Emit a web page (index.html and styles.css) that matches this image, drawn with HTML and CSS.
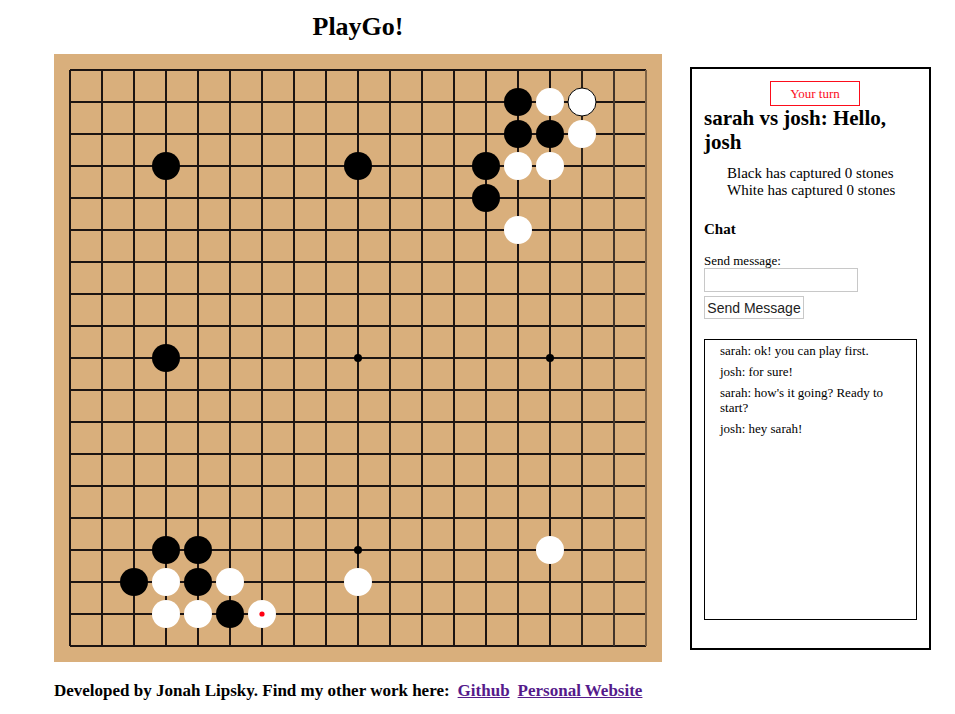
FILE: index.html
```html
<!DOCTYPE html>
<html lang="en">
<head>
<meta charset="utf-8">
<meta name="viewport" content="width=device-width, initial-scale=1">
<title>PlayGo!</title>
<link rel="stylesheet" href="styles.css">
</head>
<body>
<div class="page">
  <main class="game">
    <h1 class="title">PlayGo!</h1>
    <svg class="board" viewBox="0 0 608 608" role="img" aria-label="Go board">
      <rect class="wood" width="608" height="608"/>
      <path class="grid-line" d="M16 16H592M16 48H592M16 80H592M16 112H592M16 144H592M16 176H592M16 208H592M16 240H592M16 272H592M16 304H592M16 336H592M16 368H592M16 400H592M16 432H592M16 464H592M16 496H592M16 528H592M16 560H592M16 592H592"/>
      <path class="grid-line" d="M16 16V592M48 16V592M80 16V592M112 16V592M144 16V592M176 16V592M208 16V592M240 16V592M272 16V592M304 16V592M336 16V592M368 16V592M400 16V592M432 16V592M464 16V592M496 16V592"/>
      <path class="grid-line fade-1" d="M528 16V592"/>
      <path class="grid-line fade-2" d="M560 16V592"/>
      <path class="grid-line fade-3" d="M592 16V592"/>
      <g class="star">
        <circle cx="304" cy="304" r="4"/>
        <circle cx="496" cy="304" r="4"/>
        <circle cx="304" cy="496" r="4"/>
      </g>
      <g class="black">
        <circle cx="464" cy="48" r="14"/>
        <circle cx="464" cy="80" r="14"/>
        <circle cx="496" cy="80" r="14"/>
        <circle cx="112" cy="112" r="14"/>
        <circle cx="304" cy="112" r="14"/>
        <circle cx="432" cy="112" r="14"/>
        <circle cx="432" cy="144" r="14"/>
        <circle cx="112" cy="304" r="14"/>
        <circle cx="112" cy="496" r="14"/>
        <circle cx="144" cy="496" r="14"/>
        <circle cx="80" cy="528" r="14"/>
        <circle cx="144" cy="528" r="14"/>
        <circle cx="176" cy="560" r="14"/>
      </g>
      <g class="white">
        <circle cx="496" cy="48" r="14"/>
        <circle class="outlined" cx="528" cy="48" r="14"/>
        <circle cx="528" cy="80" r="14"/>
        <circle cx="464" cy="112" r="14"/>
        <circle cx="496" cy="112" r="14"/>
        <circle cx="464" cy="176" r="14"/>
        <circle cx="496" cy="496" r="14"/>
        <circle cx="112" cy="528" r="14"/>
        <circle cx="176" cy="528" r="14"/>
        <circle cx="304" cy="528" r="14"/>
        <circle cx="112" cy="560" r="14"/>
        <circle cx="144" cy="560" r="14"/>
        <circle cx="208" cy="560" r="14"/>
      </g>
      <circle class="last-move" cx="208" cy="560" r="2.6"/>
    </svg>
  </main>
  <aside class="panel">
    <div class="turn">Your turn</div>
    <h2 class="players">sarah vs josh: Hello, josh</h2>
    <div class="captures">
      <div>Black has captured 0 stones</div>
      <div>White has captured 0 stones</div>
    </div>
    <h3 class="chat-title">Chat</h3>
    <form class="chat-form">
      <label for="message">Send message:</label>
      <input class="message" id="message" type="text">
      <button class="send" type="button">Send Message</button>
    </form>
    <div class="log">
      <p>sarah: ok! you can play first.</p>
      <p>josh: for sure!</p>
      <p>sarah: how's it going? Ready to start?</p>
      <p>josh: hey sarah!</p>
    </div>
  </aside>
</div>
<footer class="footer">
  <span>Developed by Jonah Lipsky. Find my other work here:</span>
  <a href="#github">Github</a>
  <a href="#website">Personal Website</a>
</footer>
</body>
</html>
```
FILE: styles.css
```css
* {
  box-sizing: border-box;
}

body {
  margin: 0;
  padding: 12px 24px 12px 54px;
  background: #fff;
  color: #000;
  font-family: "Liberation Serif", "Times New Roman", serif;
}

.page {
  display: flex;
  gap: 28px;
  align-items: flex-start;
}

.game {
  flex: 0 1 608px;
  min-width: 0;
}

.title {
  margin: 0 0 12px;
  font-size: 26px;
  line-height: 30px;
  text-align: center;
}

.board {
  display: block;
  width: 100%;
  height: auto;
}

.wood {
  fill: #d9af7c;
}

.grid-line {
  fill: none;
  stroke: #1c1412;
  stroke-width: 2;
}

.fade-1 {
  stroke: #2c2219;
}

.fade-2 {
  stroke: #42342a;
}

.fade-3 {
  stroke: #7f6447;
}

.white {
  fill: #fff;
}

.outlined {
  stroke: #000;
  stroke-width: 1;
}

.last-move {
  fill: #ff0012;
}

.panel {
  flex: 1 1 0;
  min-width: 220px;
  margin-top: 55px;
  padding: 12px 12px 28px;
  border: 2px solid #000;
}

.turn {
  width: 90px;
  margin-left: 66px;
  border: 1px solid #fc0d1b;
  color: #fc0d1b;
  font-size: 13px;
  line-height: 23px;
  text-align: center;
}

.players {
  margin: 0 0 11px;
  font-size: 21px;
  line-height: 24px;
}

.captures {
  margin: 0 0 20px 23px;
  font-size: 15px;
  line-height: 17px;
}

.chat-title {
  margin: 0 0 15px;
  font-size: 15px;
  line-height: 20px;
}

.chat-form {
  display: flex;
  flex-direction: column;
  align-items: flex-start;
  margin-bottom: 20px;
  font-size: 13px;
  line-height: 14px;
}

.message {
  width: 154px;
  height: 24px;
  margin-bottom: 4px;
  border: 1px solid #c8c8c8;
  background: #fff;
}

.send {
  width: 100px;
  height: 23px;
  padding: 0 2px;
  border: 1px solid #c8c8c8;
  background: #fff;
  color: #222;
  font-family: "Liberation Sans", Arial, sans-serif;
  font-size: 14px;
}

.log {
  min-height: 281px;
  padding: 3px 15px;
  border: 1px solid #000;
  font-size: 13px;
  line-height: 15px;
}

.log p {
  margin: 0 0 6px;
}

.footer {
  display: flex;
  flex-wrap: wrap;
  gap: 8px;
  margin-top: 19px;
  font-size: 17px;
  line-height: 20px;
  font-weight: bold;
}

.footer a {
  color: #551a8b;
}
```
